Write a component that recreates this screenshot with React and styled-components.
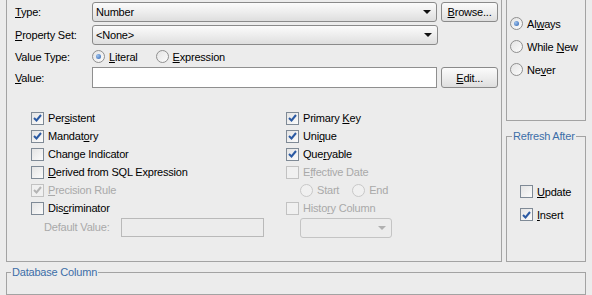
import React from 'react';
import styled, { createGlobalStyle } from 'styled-components';

const GlobalStyle = createGlobalStyle`
  html, body {
    margin: 0;
    padding: 0;
    background: #ececec;
  }
  body {
    font-family: "Liberation Sans", Arial, sans-serif;
    font-size: 11px;
    letter-spacing: -0.2px;
    color: #000;
  }
`;

const Page = styled.div`
  width: 592px;
  height: 295px;
  overflow: hidden;
  background: #ececec;
  padding: 0 6px;
  box-sizing: border-box;
  display: flex;
  flex-direction: column;
`;

const TopRow = styled.div`
  display: flex;
  gap: 4px;
`;

const MainPanel = styled.div`
  width: 496px;
  height: 262px;
  box-sizing: border-box;
  border: 1px solid #a3a3a3;
  border-top: none;
  padding: 2px 3px 0 8px;
  display: flex;
  flex-direction: column;
`;

const SideColumn = styled.div`
  width: 80px;
  display: flex;
  flex-direction: column;
`;

const SideBox = styled.div`
  height: 121px;
  box-sizing: border-box;
  border: 1px solid #a3a3a3;
  border-top: none;
  padding: 17px 0 0 3px;
  display: flex;
  flex-direction: column;
  gap: 10px;
`;

const Group = styled.fieldset`
  margin: ${(p) => p.$mt || 0}px 0 0;
  padding: 0;
  border: 1px solid #a3a3a3;
  min-width: 0;
  box-sizing: border-box;
  height: ${(p) => p.$h}px;
  legend {
    margin-left: ${(p) => p.$lm || 4}px;
    padding: 0 1px;
    color: #3c6ea8;
    font-size: 11px;
    line-height: 13px;
  }
`;

const RefreshBody = styled.div`
  padding: 42px 0 0 13px;
  display: flex;
  flex-direction: column;
  gap: 10px;
`;

const FormRow = styled.div`
  display: flex;
  align-items: center;
  height: ${(p) => p.$h || 20}px;
  margin-bottom: ${(p) => p.$mb || 0}px;
`;

const Label = styled.span`
  width: 77px;
  flex: none;
`;

const U = styled.span`
  text-decoration: underline;
`;

const Combo = styled.div`
  width: ${(p) => p.$w}px;
  height: 20px;
  box-sizing: border-box;
  border: 1px solid ${(p) => (p.$disabled ? '#c4c4c4' : '#8a8a8a')};
  border-radius: 3px;
  background: linear-gradient(#fbfbfb, #ececec 55%, #dedede);
  display: flex;
  align-items: center;
  padding: 0 4px 0 3px;
  color: #000;
  ${(p) => p.$disabled && 'background: #ececec;'}
`;

const ComboText = styled.span`
  flex: 1;
`;

const Arrow = styled.span`
  width: 0;
  height: 0;
  border-left: 4px solid transparent;
  border-right: 4px solid transparent;
  border-top: 4px solid ${(p) => (p.$disabled ? '#b0b0b0' : '#111')};
  margin-right: 1px;
`;

const Button = styled.div`
  width: 57px;
  height: ${(p) => p.$h || 20}px;
  box-sizing: border-box;
  margin-left: 4px;
  border: 1px solid #8a8a8a;
  border-radius: 3px;
  background: linear-gradient(#fbfbfb, #ececec 55%, #dedede);
  display: flex;
  align-items: center;
  justify-content: center;
`;

const TextInput = styled.div`
  width: ${(p) => p.$w}px;
  height: ${(p) => p.$h || 21}px;
  box-sizing: border-box;
  border: 1px solid ${(p) => (p.$disabled ? '#b9b9b9' : '#8f8f8f')};
  background: ${(p) => (p.$disabled ? '#ececec' : '#fff')};
`;

const Option = styled.label`
  display: inline-flex;
  align-items: center;
  gap: 4px;
  height: 13px;
  color: ${(p) => (p.$disabled ? '#a9a9a9' : '#000')};
  margin-right: ${(p) => p.$mr || 0}px;
  margin-left: ${(p) => p.$ml || 0}px;
`;

const Box = styled.span`
  width: 13px;
  height: 13px;
  box-sizing: border-box;
  flex: none;
  border: 1px solid ${(p) => (p.$disabled ? '#c2c2c2' : '#7f8a96')};
  background: ${(p) =>
    p.$disabled ? '#f0f0f0' : 'linear-gradient(135deg, #e4e4e4, #fbfbfb)'};
  display: flex;
  align-items: center;
  justify-content: center;
`;

const Round = styled(Box)`
  border-radius: 50%;
  border-color: ${(p) => (p.$disabled ? '#c8c8c8' : '#8f8f8f')};
`;

const Dot = styled.span`
  width: 5px;
  height: 5px;
  border-radius: 50%;
  background: radial-gradient(circle at 35% 35%, #9cc2ee, #2f62b0);
`;

const Check = ({ disabled }) => (
  <svg width="9" height="8" viewBox="0 0 9 8">
    <path
      d="M1 4 L3.5 6.5 L8 1"
      fill="none"
      stroke={disabled ? '#b4b4b4' : '#2b5aa3'}
      strokeWidth="2"
    />
  </svg>
);

const CheckBox = ({ checked, disabled, children, ...rest }) => (
  <Option $disabled={disabled} {...rest}>
    <Box $disabled={disabled}>{checked && <Check disabled={disabled} />}</Box>
    <span>{children}</span>
  </Option>
);

const Radio = ({ checked, disabled, children, ...rest }) => (
  <Option $disabled={disabled} {...rest}>
    <Round $disabled={disabled}>{checked && <Dot />}</Round>
    <span>{children}</span>
  </Option>
);

const Columns = styled.div`
  display: flex;
  margin-top: 21px;
  padding-left: 16px;
`;

const Col = styled.div`
  width: ${(p) => p.$w}px;
  display: flex;
  flex-direction: column;
`;

const CheckRow = styled.div`
  height: ${(p) => p.$h || 18}px;
  display: flex;
  align-items: center;
  padding-left: ${(p) => p.$indent || 0}px;
`;

const SubLabel = styled.span`
  color: #a9a9a9;
  width: 77px;
`;

export default function App() {
  return (
    <Page>
      <GlobalStyle />
      <TopRow>
        <MainPanel>
          <FormRow $mb={3}>
            <Label><U>T</U>ype:</Label>
            <Combo $w={346}>
              <ComboText>Number</ComboText>
              <Arrow />
            </Combo>
            <Button>
              <span><U>B</U>rowse...</span>
            </Button>
          </FormRow>
          <FormRow $mb={1}>
            <Label><U>P</U>roperty Set:</Label>
            <Combo $w={346}>
              <ComboText>&lt;None&gt;</ComboText>
              <Arrow />
            </Combo>
          </FormRow>
          <FormRow $h={21}>
            <Label>Value Type:</Label>
            <Radio checked $mr={18}><U>L</U>iteral</Radio>
            <Radio><U>E</U>xpression</Radio>
          </FormRow>
          <FormRow $h={21}>
            <Label><U>V</U>alue:</Label>
            <TextInput $w={347} />
            <Button $h={21}>
              <span><U>E</U>dit...</span>
            </Button>
          </FormRow>
          <Columns>
            <Col $w={255}>
              <CheckRow><CheckBox checked>Per<U>s</U>istent</CheckBox></CheckRow>
              <CheckRow><CheckBox checked>Mandat<U>o</U>ry</CheckBox></CheckRow>
              <CheckRow><CheckBox>Chan<U>g</U>e Indicator</CheckBox></CheckRow>
              <CheckRow><CheckBox><U>D</U>erived from SQL Expression</CheckBox></CheckRow>
              <CheckRow><CheckBox checked disabled><U>P</U>recision Rule</CheckBox></CheckRow>
              <CheckRow><CheckBox>Dis<U>c</U>riminator</CheckBox></CheckRow>
              <CheckRow $indent={13} $h={20}>
                <SubLabel>Default Value:</SubLabel>
                <TextInput $w={143} $h={19} $disabled />
              </CheckRow>
            </Col>
            <Col $w={200}>
              <CheckRow><CheckBox checked>Primary <U>K</U>ey</CheckBox></CheckRow>
              <CheckRow><CheckBox checked>Uni<U>q</U>ue</CheckBox></CheckRow>
              <CheckRow><CheckBox checked>Que<U>r</U>yable</CheckBox></CheckRow>
              <CheckRow><CheckBox disabled>E<U>f</U>fective Date</CheckBox></CheckRow>
              <CheckRow $indent={14}>
                <Radio disabled $mr={13}>Start</Radio>
                <Radio disabled>End</Radio>
              </CheckRow>
              <CheckRow><CheckBox disabled>Histo<U>r</U>y Column</CheckBox></CheckRow>
              <CheckRow $indent={14} $h={22}>
                <Combo $w={92} $disabled>
                  <ComboText />
                  <Arrow $disabled />
                </Combo>
              </CheckRow>
            </Col>
          </Columns>
        </MainPanel>
        <SideColumn>
          <SideBox>
            <Radio checked>Al<U>w</U>ays</Radio>
            <Radio>While <U>N</U>ew</Radio>
            <Radio>Ne<U>v</U>er</Radio>
          </SideBox>
          <Group $mt={9} $h={132} $lm={5}>
            <legend>Refresh After</legend>
            <RefreshBody>
              <CheckBox><U>U</U>pdate</CheckBox>
              <CheckBox checked><U>I</U>nsert</CheckBox>
            </RefreshBody>
          </Group>
        </SideColumn>
      </TopRow>
      <Group $mt={4} $h={60} $lm={4}>
        <legend>Database Column</legend>
      </Group>
    </Page>
  );
}
